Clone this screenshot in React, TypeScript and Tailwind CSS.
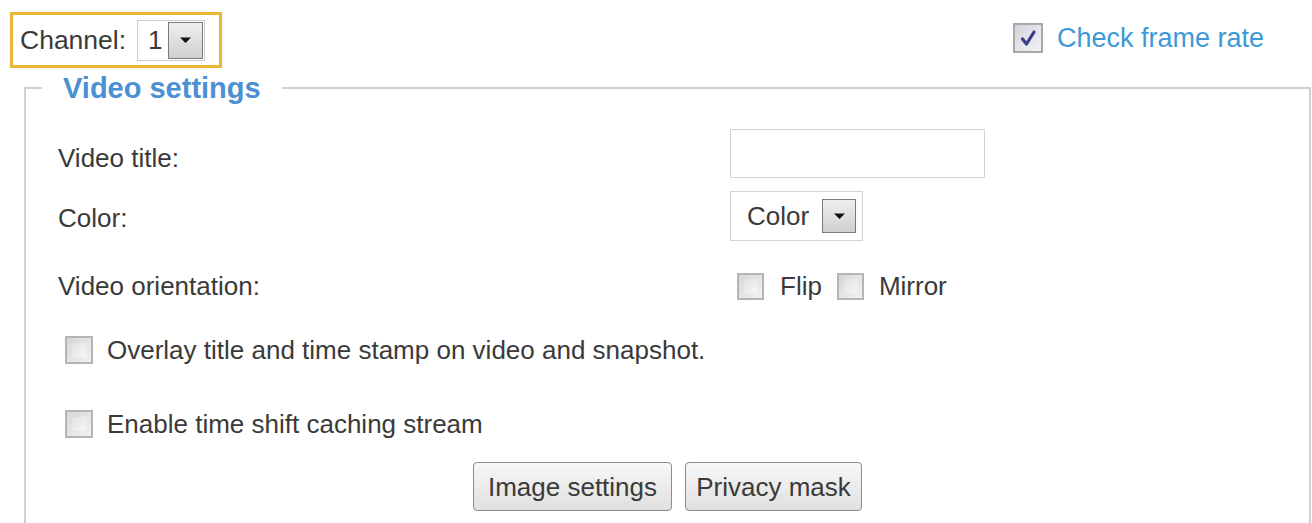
import React from "react";

const font = { fontFamily: '"Liberation Sans", Arial, sans-serif' };

function Box({ size = 27 }: { size?: number }) {
  return (
    <span
      className="inline-flex shrink-0 items-center justify-center border-2 border-[#b5b5b5] bg-linear-to-br from-[#d6d6d6] to-[#f2f2f2]"
      style={{ width: size, height: size }}
    >
      <span className="block h-[60%] w-[60%] bg-linear-to-br from-[#e2e2e2] to-[#f6f6f6]" />
    </span>
  );
}

function Arrow({ w, h }: { w: number; h: number }) {
  return (
    <span
      className="inline-flex shrink-0 items-center justify-center border border-[#7a7a7a] bg-linear-to-b from-[#f0f0f0] to-[#cfcfcf]"
      style={{ width: w, height: h }}
    >
      <svg width="13" height="8" viewBox="0 0 13 8">
        <path d="M1 1.5 L12 1.5 L6.5 7 Z" fill="#111" />
      </svg>
    </span>
  );
}

export default function App() {
  return (
    <div
      className="relative h-[523px] w-[1312px] overflow-hidden bg-white text-[26px] leading-[30px] text-[#3a3a3a]"
      style={font}
    >
      {/* top row */}
      <div className="flex h-[74px] items-start justify-between">
        <div className="ml-[10px] mt-[12px] flex h-[56px] w-[212px] items-center border-[3px] border-[#e8b733] pl-[7px]">
          <span className="text-[26.5px]">Channel:</span>
          <span className="ml-[11px] flex h-[41px] w-[68px] items-center justify-between border border-[#cbcbcb] bg-white pl-[10px] pr-[1px]">
            <span>1</span>
            <Arrow w={35} h={37} />
          </span>
        </div>
        <div className="mr-[48px] mt-[23px] flex items-center">
          <span className="inline-flex h-[30px] w-[30px] items-center justify-center border-2 border-[#a8a8a8] bg-linear-to-br from-[#d4d4dc] to-[#f2f2f6]">
            <svg width="20" height="20" viewBox="0 0 20 20">
              <path
                d="M4.5 11 L8.5 16 L16 4"
                fill="none"
                stroke="#3a3d8a"
                strokeWidth="3.2"
                strokeLinecap="round"
                strokeLinejoin="round"
              />
            </svg>
          </span>
          <span className="ml-[14px] text-[27px] text-[#3d98d6]">Check frame rate</span>
        </div>
      </div>

      {/* fieldset */}
      <fieldset className="ml-[24px] w-[1287px] border-2 border-[#d0d0d0] pb-[40px]">
        <legend className="ml-[16px] px-[21px] text-[29px] font-bold leading-[28px] text-[#4a90d3]">
          Video settings
        </legend>

        <div className="flex flex-col">
          <div className="mt-[27px] flex h-[49px] items-center">
            <span className="ml-[32px] w-[672px] pt-[8px]">Video title:</span>
            <span className="block h-[49px] w-[255px] border border-[#d3d3d3] bg-white" />
          </div>

          <div className="mt-[13px] flex h-[50px] items-center">
            <span className="ml-[32px] w-[672px] pt-[4px]">Color:</span>
            <span className="flex h-[50px] w-[133px] items-center justify-between border border-[#d3d3d3] bg-white pl-[16px] pr-[6px]">
              <span>Color</span>
              <Arrow w={34} h={34} />
            </span>
          </div>

          <div className="mt-[31px] flex h-[28px] items-center">
            <span className="ml-[32px] w-[672px]">Video orientation:</span>
            <span className="ml-[7px] flex items-center">
              <Box />
              <span className="ml-[16px]">Flip</span>
              <span className="ml-[15px] flex">
                <Box />
              </span>
              <span className="ml-[15px]">Mirror</span>
            </span>
          </div>

          <div className="mt-[36px] flex h-[28px] items-center pl-[39px]">
            <Box size={28} />
            <span className="ml-[14px]">Overlay title and time stamp on video and snapshot.</span>
          </div>

          <div className="mt-[46px] flex h-[28px] items-center pl-[39px]">
            <Box size={28} />
            <span className="ml-[14px]">Enable time shift caching stream</span>
          </div>

          <div className="mt-[24px] flex justify-center gap-[13px]">
            <button
              type="button"
              className="h-[49px] w-[199px] rounded-[4px] border border-[#8c8c8c] bg-linear-to-b from-[#f7f7f7] to-[#e0e0e0] text-[#3a3a3a]"
            >
              Image settings
            </button>
            <button
              type="button"
              className="h-[49px] w-[177px] rounded-[4px] border border-[#8c8c8c] bg-linear-to-b from-[#f7f7f7] to-[#e0e0e0] text-[#3a3a3a]"
            >
              Privacy mask
            </button>
          </div>
        </div>
      </fieldset>
    </div>
  );
}
